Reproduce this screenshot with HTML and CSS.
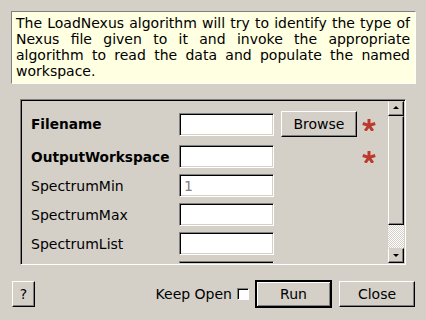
FILE: index.html
```html
<!DOCTYPE html>
<html lang="en">

<head>
    <meta charset="UTF-8">
    <title>LoadNexus input dialog</title>
    <link rel="stylesheet" href="styles.css">
</head>

<body>
    <div class="dialog">
        <p class="description">The LoadNexus algorithm will try to identify the type of Nexus file given to it and invoke the appropriate algorithm to read the data and populate the named workspace.</p>

        <div class="frame">
            <div class="viewport">
                <div class="row first">
                    <label class="name bold">Filename</label>
                    <input type="text" class="field">
                    <button class="btn browse">Browse</button>
                    <span class="star"><svg width="14" height="12" viewBox="0 0 14 12"><g stroke="#bb3a2c" stroke-width="3"><line x1="7" y1="6.5" x2="7" y2="0"/><line x1="7" y1="6.5" x2="13.2" y2="4.5"/><line x1="7" y1="6.5" x2="10.8" y2="11.8"/><line x1="7" y1="6.5" x2="3.2" y2="11.8"/><line x1="7" y1="6.5" x2="0.8" y2="4.5"/></g></svg></span>
                </div>
                <div class="row second">
                    <label class="name bold">OutputWorkspace</label>
                    <input type="text" class="field">
                    <span class="gap"></span>
                    <span class="star"><svg width="14" height="12" viewBox="0 0 14 12"><g stroke="#bb3a2c" stroke-width="3"><line x1="7" y1="6.5" x2="7" y2="0"/><line x1="7" y1="6.5" x2="13.2" y2="4.5"/><line x1="7" y1="6.5" x2="10.8" y2="11.8"/><line x1="7" y1="6.5" x2="3.2" y2="11.8"/><line x1="7" y1="6.5" x2="0.8" y2="4.5"/></g></svg></span>
                </div>
                <div class="row">
                    <label class="name">SpectrumMin</label>
                    <input type="text" class="field" placeholder="1">
                </div>
                <div class="row">
                    <label class="name">SpectrumMax</label>
                    <input type="text" class="field">
                </div>
                <div class="row">
                    <label class="name">SpectrumList</label>
                    <input type="text" class="field">
                </div>
                <div class="row">
                    <label class="name"></label>
                    <input type="text" class="field">
                </div>
            </div>
            <div class="scrollbar">
                <div class="arrow up"></div>
                <div class="handle"></div>
                <div class="track"></div>
                <div class="arrow down"></div>
            </div>
        </div>

        <div class="actions">
            <button class="btn help">?</button>
            <span class="spacer"></span>
            <label class="keep">Keep Open <span class="check"></span></label>
            <button class="btn run">Run</button>
            <button class="btn close">Close</button>
        </div>
    </div>
</body>

</html>
```

FILE: styles.css
```css
body {
    margin: 0;
    background-color: #d4d0c8;
    font-family: "DejaVu Sans", Verdana, sans-serif;
    font-size: 14px;
    color: black;
}

.dialog {
    width: 426px;
    height: 320px;
    overflow: hidden;
}

.description {
    margin: 11px 10px 0 11px;
    padding: 3px 5px 2px 4px;
    height: 66px;
    line-height: 16px;
    text-align: justify;
    background-color: #ffffe1;
    border: 1px solid;
    border-color: #808080 #ffffff #ffffff #808080;
}

/* scroll area with the properties */
.frame {
    display: flex;
    margin: 15px 0 0 20px;
    width: 382px;
    height: 162px;
    border: 1px solid;
    border-color: #808080 #ffffff #ffffff #808080;
    box-shadow: inset 1px 1px #000000, inset -1px -1px #d4d0c8;
    padding: 1px;
}

.viewport {
    flex: 1;
    overflow: hidden;
    padding: 10px 0 0 9px;
}

.row {
    display: flex;
    align-items: center;
    height: 23px;
    margin-top: 6px;
}

.row.first {
    height: 26px;
    margin-top: 0;
}

.row.second {
    margin-top: 8px;
}

.name {
    width: 148px;
    flex: none;
}

.bold {
    font-weight: bold;
    font-size: 13.7px;
}

.field {
    box-sizing: border-box;
    width: 95px;
    height: 23px;
    margin: 0;
    padding: 0 4px;
    font: inherit;
    background-color: white;
    border: 1px solid;
    border-color: #808080 #ffffff #ffffff #808080;
    box-shadow: inset 1px 1px #000000, inset -1px -1px #d4d0c8;
    outline: 0;
}

.field::placeholder {
    color: #808080;
}

.btn {
    box-sizing: border-box;
    margin: 0;
    padding: 0;
    font: inherit;
    color: black;
    background-color: #d4d0c8;
    border: 1px solid;
    border-color: #ffffff #000000 #000000 #ffffff;
    box-shadow: inset -1px -1px #808080;
}

.browse {
    width: 76px;
    height: 26px;
    margin-left: 7px;
}

.gap {
    width: 83px;
}

.star {
    display: flex;
    margin-left: 5px;
    margin-top: 1px;
}

.scrollbar {
    display: flex;
    flex-direction: column;
    width: 16px;
    flex: none;
}

.arrow,
.handle {
    box-sizing: border-box;
    background-color: #d4d0c8;
    border: 1px solid;
    border-color: #d4d0c8 #000000 #000000 #ffffff;
    box-shadow: inset -1px -1px #808080;
    position: relative;
}

.arrow {
    height: 15px;
}

.arrow::after {
    content: "";
    position: absolute;
    left: 4px;
    border-left: 3px solid transparent;
    border-right: 3px solid transparent;
}

.up::after {
    top: 4px;
    border-bottom: 3px solid black;
}

.down::after {
    top: 5px;
    border-top: 3px solid black;
}

.handle {
    height: 109px;
}

.track {
    flex: 1;
    background-color: #ffffff;
    background-image: linear-gradient(45deg, #d4d0c8 25%, transparent 25%, transparent 75%, #d4d0c8 75%), linear-gradient(45deg, #d4d0c8 25%, transparent 25%, transparent 75%, #d4d0c8 75%);
    background-size: 2px 2px;
    background-position: 0 0, 1px 1px;
}

.actions {
    display: flex;
    align-items: center;
    margin: 15px 11px 0 12px;
    height: 28px;
}

.help {
    width: 23px;
    height: 26px;
}

.spacer {
    flex: 1;
}

.keep {
    display: flex;
    align-items: center;
    gap: 5px;
}

.check {
    box-sizing: border-box;
    width: 12px;
    height: 12px;
    background-color: white;
    border: 1px solid;
    border-color: #808080 #ffffff #ffffff #808080;
    box-shadow: inset 1px 1px #000000;
}

.run {
    width: 77px;
    height: 28px;
    margin-left: 6px;
    border-width: 2px;
    border-color: #000000;
    box-shadow: inset 1px 1px #ffffff, inset -1px -1px #808080;
}

.close {
    width: 76px;
    height: 26px;
    margin-left: 7px;
}
```
